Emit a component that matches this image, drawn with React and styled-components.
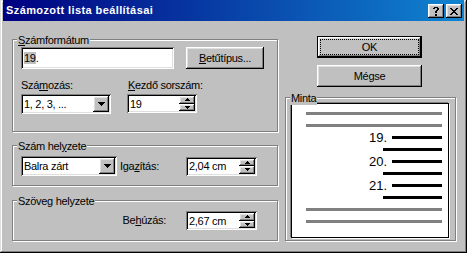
import React from 'react';
import styled, { createGlobalStyle, css } from 'styled-components';

const GlobalStyle = createGlobalStyle`
  html, body { margin: 0; padding: 0; background: #c0c0c0; }
  body { font-family: "Liberation Sans", Arial, sans-serif; }
`;

const FONT = `"Liberation Sans", Arial, sans-serif`;

const raised = css`
  background: #c0c0c0;
  box-shadow: inset -1px -1px 0 #000, inset 1px 1px 0 #fff, inset -2px -2px 0 #808080, inset 2px 2px 0 #dfdfdf;
`;

const sunken = css`
  background: #fff;
  box-shadow: inset 1px 1px 0 #808080, inset -1px -1px 0 #fff, inset 2px 2px 0 #000, inset -2px -2px 0 #dfdfdf;
`;

const Window = styled.div`
  width: 467px;
  height: 253px;
  box-sizing: border-box;
  background: #c0c0c0;
  padding: 0 3px 3px 3px;
  box-shadow: inset -1px -1px 0 #000, inset 1px 1px 0 #dfdfdf, inset -2px -2px 0 #808080, inset 2px 2px 0 #fff;
  display: flex;
  flex-direction: column;
  font-family: ${FONT};
  font-size: 11px;
  letter-spacing: -0.3px;
  color: #000;
  overflow: hidden;
`;

const TitleBar = styled.div`
  height: 21px;
  flex: none;
  display: flex;
  align-items: flex-start;
  padding: 0 2px 0 3px;
  background: linear-gradient(to right, #000080, #1084d0);
`;

const TitleText = styled.span`
  color: #fff;
  font-weight: bold;
  font-size: 11px;
  letter-spacing: 0.4px;
  line-height: 21px;
  white-space: nowrap;
`;

const CaptionButtons = styled.div`
  margin-left: auto;
  margin-top: 4px;
  display: flex;
  gap: 2px;
`;

const CaptionButton = styled.div`
  ${raised};
  width: 16px;
  height: 14px;
  display: flex;
  align-items: center;
  justify-content: center;
  svg { display: block; }
`;

const Body = styled.div`
  flex: 1;
  display: flex;
  gap: 7px;
  padding: 15px 0 0 9px;
`;

const LeftColumn = styled.div`
  width: 266px;
  display: flex;
  flex-direction: column;
`;

const RightColumn = styled.div`
  width: 171px;
  display: flex;
  flex-direction: column;
`;

const Group = styled.div`
  position: relative;
  box-sizing: border-box;
  border: 1px solid #808080;
  box-shadow: inset 1px 1px 0 #fff, 1px 1px 0 #fff;
  margin-top: ${p => p.$top}px;
  height: ${p => p.$h}px;
  padding: ${p => p.$pad};
  display: flex;
  flex-direction: column;
`;

const GroupLabel = styled.span`
  position: absolute;
  left: 4px;
  top: -6px;
  padding: 0 1px;
  background: #c0c0c0;
  line-height: 13px;
  white-space: nowrap;
`;

const U = styled.span`
  text-decoration: underline;
  text-underline-offset: 1px;
`;

const Row = styled.div`
  display: flex;
  align-items: ${p => p.$align || 'flex-start'};
  justify-content: ${p => p.$justify || 'flex-start'};
  gap: ${p => p.$gap || 0}px;
  margin-top: ${p => p.$top || 0}px;
`;

const Field = styled.div`
  display: flex;
  flex-direction: column;
  gap: 2px;
  width: ${p => p.$w}px;
`;

const Label = styled.span`
  display: block;
  line-height: 13px;
  white-space: nowrap;
  margin-left: ${p => p.$left || 0}px;
`;

const TextBox = styled.div`
  ${sunken};
  box-sizing: border-box;
  width: ${p => p.$w}px;
  height: ${p => p.$h}px;
  padding: 0 3px;
  display: flex;
  align-items: center;
  white-space: nowrap;
`;

const FieldCode = styled.span`
  background: #c0c0c0;
`;

const Button = styled.button`
  ${raised};
  position: relative;
  box-sizing: border-box;
  width: ${p => p.$w}px;
  height: ${p => p.$h}px;
  margin-top: ${p => p.$top || 0}px;
  margin-left: ${p => p.$left || 0}px;
  border: ${p => (p.$default ? '1px solid #000' : 'none')};
  padding: 0;
  font-family: ${FONT};
  font-size: 11px;
  letter-spacing: -0.3px;
  color: #000;
  display: flex;
  align-items: center;
  justify-content: center;
  white-space: nowrap;
`;

const FocusRing = styled.span`
  position: absolute;
  inset: 2px;
  border: 1px dotted #000;
  pointer-events: none;
`;

const Combo = styled.div`
  ${sunken};
  box-sizing: border-box;
  width: ${p => p.$w}px;
  height: ${p => p.$h}px;
  padding: 2px;
  display: flex;
`;

const ComboText = styled.span`
  flex: 1;
  padding-left: 1px;
  display: flex;
  align-items: center;
  white-space: nowrap;
`;

const DropButton = styled.span`
  ${raised};
  width: 16px;
  display: flex;
  align-items: center;
  justify-content: center;
`;

const Spin = styled.div`
  ${sunken};
  box-sizing: border-box;
  width: ${p => p.$w}px;
  height: ${p => p.$h}px;
  padding: 2px;
  display: flex;
  margin-left: ${p => (p.$push ? 'auto' : '0')};
`;

const SpinText = styled.span`
  flex: 1;
  padding-left: 1px;
  display: flex;
  align-items: center;
  white-space: nowrap;
`;

const SpinButtons = styled.span`
  width: 16px;
  display: flex;
  flex-direction: column;
`;

const SpinButton = styled.span`
  ${raised};
  flex: 1;
  display: flex;
  align-items: center;
  justify-content: center;
`;

const Preview = styled.div`
  flex: 1;
  background: #fff;
  border: 1px solid #000;
  box-shadow: -1px -1px 0 #808080, 1px 1px 0 #fff;
  padding: 8px 6px 0 14px;
  display: flex;
  flex-direction: column;
  gap: 9px;
`;

const Rule = styled.div`
  height: 3px;
  flex: none;
  background: ${p => p.$color};
  width: ${p => (p.$w ? `${p.$w}px` : 'auto')};
  align-self: ${p => (p.$w ? 'flex-end' : 'stretch')};
`;

const NumberRow = styled.div`
  height: 3px;
  flex: none;
  display: flex;
  justify-content: flex-end;
  align-items: flex-start;
`;

const ItemNumber = styled.span`
  font-size: 13px;
  line-height: 13px;
  letter-spacing: 0;
  margin-top: -5px;
  margin-right: 5px;
`;

const ItemLine = styled.span`
  width: 50px;
  height: 3px;
  background: #000;
`;

const Caret = ({ size = 'combo' }) =>
  size === 'combo' ? (
    <svg width="7" height="4" viewBox="0 0 7 4" shapeRendering="crispEdges">
      <rect x="0" y="0" width="7" height="1" fill="#000" />
      <rect x="1" y="1" width="5" height="1" fill="#000" />
      <rect x="2" y="2" width="3" height="1" fill="#000" />
      <rect x="3" y="3" width="1" height="1" fill="#000" />
    </svg>
  ) : null;

const SpinArrow = ({ up }) => (
  <svg width="5" height="3" viewBox="0 0 5 3" shapeRendering="crispEdges" style={{ display: 'block' }}>
    {up ? (
      <>
        <rect x="2" y="0" width="1" height="1" fill="#000" />
        <rect x="1" y="1" width="3" height="1" fill="#000" />
        <rect x="0" y="2" width="5" height="1" fill="#000" />
      </>
    ) : (
      <>
        <rect x="0" y="0" width="5" height="1" fill="#000" />
        <rect x="1" y="1" width="3" height="1" fill="#000" />
        <rect x="2" y="2" width="1" height="1" fill="#000" />
      </>
    )}
  </svg>
);

const HelpGlyph = () => (
  <svg width="6" height="9" viewBox="0 0 6 9" shapeRendering="crispEdges">
    <rect x="1" y="0" width="4" height="1" fill="#000" />
    <rect x="0" y="1" width="2" height="1" fill="#000" />
    <rect x="4" y="1" width="2" height="1" fill="#000" />
    <rect x="4" y="2" width="2" height="1" fill="#000" />
    <rect x="3" y="3" width="2" height="1" fill="#000" />
    <rect x="2" y="4" width="2" height="1" fill="#000" />
    <rect x="2" y="5" width="2" height="1" fill="#000" />
    <rect x="2" y="7" width="2" height="2" fill="#000" />
  </svg>
);

const CloseGlyph = () => (
  <svg width="8" height="7" viewBox="0 0 8 7" shapeRendering="crispEdges">
    <rect x="0" y="0" width="2" height="1" fill="#000" />
    <rect x="6" y="0" width="2" height="1" fill="#000" />
    <rect x="1" y="1" width="2" height="1" fill="#000" />
    <rect x="5" y="1" width="2" height="1" fill="#000" />
    <rect x="2" y="2" width="4" height="1" fill="#000" />
    <rect x="3" y="3" width="2" height="1" fill="#000" />
    <rect x="2" y="4" width="4" height="1" fill="#000" />
    <rect x="1" y="5" width="2" height="1" fill="#000" />
    <rect x="5" y="5" width="2" height="1" fill="#000" />
    <rect x="0" y="6" width="2" height="1" fill="#000" />
    <rect x="6" y="6" width="2" height="1" fill="#000" />
  </svg>
);

const SpinBox = ({ value, w, h = 19, push }) => (
  <Spin $w={w} $h={h} $push={push}>
    <SpinText>{value}</SpinText>
    <SpinButtons>
      <SpinButton><SpinArrow up /></SpinButton>
      <SpinButton><SpinArrow /></SpinButton>
    </SpinButtons>
  </Spin>
);

const ComboBox = ({ value, w, h = 20 }) => (
  <Combo $w={w} $h={h}>
    <ComboText>{value}</ComboText>
    <DropButton><Caret /></DropButton>
  </Combo>
);

const items = ['19.', '20.', '21.'];

export default function App() {
  return (
    <>
      <GlobalStyle />
      <Window>
        <TitleBar>
          <TitleText>Számozott lista beállításai</TitleText>
          <CaptionButtons>
            <CaptionButton><HelpGlyph /></CaptionButton>
            <CaptionButton><CloseGlyph /></CaptionButton>
          </CaptionButtons>
        </TitleBar>
        <Body>
          <LeftColumn>
            <Group $top={3} $h={93} $pad="7px 0 0 8px">
              <GroupLabel><U>S</U>zámformátum</GroupLabel>
              <Row $gap={12}>
                <TextBox $w={153} $h={22}>
                  <FieldCode>19</FieldCode>.
                </TextBox>
                <Button $w={78} $h={22}><U>B</U>etűtípus...</Button>
              </Row>
              <Row $top={10} $gap={16}>
                <Field $w={90}>
                  <Label>Szá<U>m</U>ozás:</Label>
                  <ComboBox value="1, 2, 3, ..." w={90} />
                </Field>
                <Field $w={70}>
                  <Label $left={1}><U>K</U>ezdő sorszám:</Label>
                  <SpinBox value="19" w={70} />
                </Field>
              </Row>
            </Group>
            <Group $top={13} $h={41} $pad="10px 20px 0 8px">
              <GroupLabel>Szám hel<U>y</U>zete</GroupLabel>
              <Row $align="center">
                <ComboBox value="Balra zárt" w={96} />
                <Label $left={3}>Iga<U>z</U>ítás:</Label>
                <SpinBox value="2,04 cm" w={71} push />
              </Row>
            </Group>
            <Group $top={14} $h={41} $pad="10px 20px 0 8px">
              <GroupLabel>Szöveg helyzete</GroupLabel>
              <Row $align="center" $justify="flex-end" $gap={20}>
                <Label>Be<U>h</U>úzás:</Label>
                <SpinBox value="2,67 cm" w={71} />
              </Row>
            </Group>
          </LeftColumn>
          <RightColumn>
            <Button $w={105} $h={22} $left={32} $default>
              OK
              <FocusRing />
            </Button>
            <Button $w={105} $h={22} $left={32} $top={7}>Mégse</Button>
            <Group $top={10} $h={144} $pad="5px 6px 2px 5px">
              <GroupLabel>Minta</GroupLabel>
              <Preview>
                <Rule $color="#808080" />
                <Rule $color="#808080" />
                {items.map(n => (
                  <React.Fragment key={n}>
                    <NumberRow>
                      <ItemNumber>{n}</ItemNumber>
                      <ItemLine />
                    </NumberRow>
                    <Rule $color="#000" $w={59} />
                  </React.Fragment>
                ))}
                <Rule $color="#808080" />
                <Rule $color="#808080" />
              </Preview>
            </Group>
          </RightColumn>
        </Body>
      </Window>
    </>
  );
}
